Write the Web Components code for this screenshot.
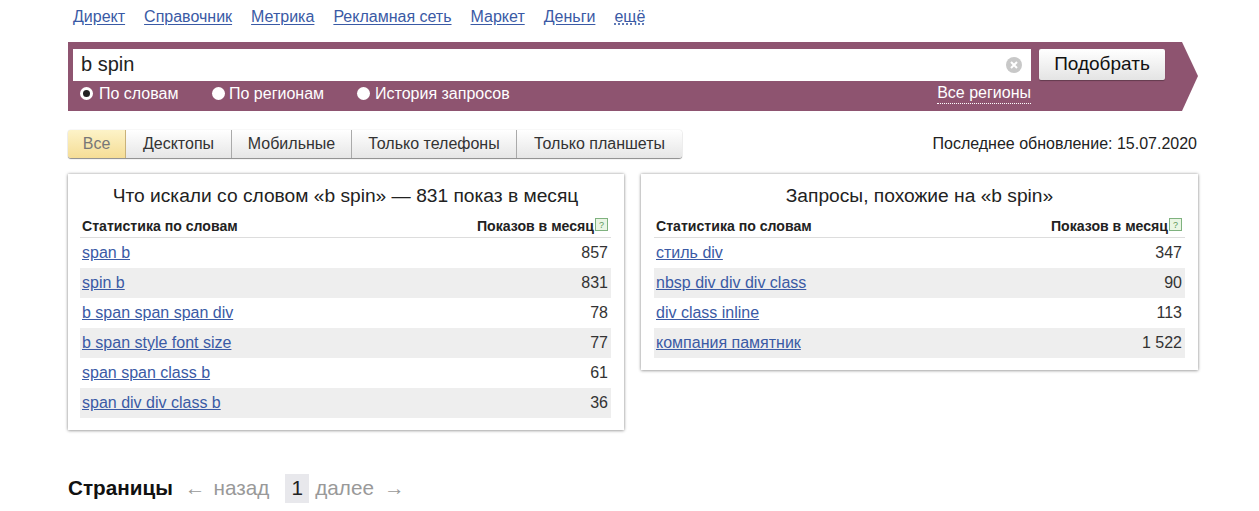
<!DOCTYPE html>
<html>
<head>
<meta charset="utf-8">
<style>
  html, body { margin: 0; padding: 0; background: #fff; }
  body { font-family: "Liberation Sans", Arial, sans-serif; color: #222; }
</style>
</head>
<body>
<ws-page>
  <ws-nav></ws-nav>
  <ws-search query="b spin"></ws-search>
  <ws-filter date="15.07.2020"></ws-filter>
  <ws-columns>
    <ws-panel title="Что искали со словом «b spin» — 831 показ в месяц"
      rows='[["span b","857"],["spin b","831"],["b span span span div","78"],["b span style font size","77"],["span span class b","61"],["span div div class b","36"]]'></ws-panel>
    <ws-panel title="Запросы, похожие на «b spin»"
      rows='[["стиль div","347"],["nbsp div div div class","90"],["div class inline","113"],["компания памятник","1 522"]]'></ws-panel>
  </ws-columns>
  <ws-pager></ws-pager>
</ws-page>

<script>
class WsPage extends HTMLElement {
  constructor() {
    super();
    this.attachShadow({ mode: "open" });
    this.shadowRoot.innerHTML = `
      <style>
        :host { display: block; width: 1130px; margin-left: 68px; }
      </style>
      <slot></slot>
    `;
  }
}

class WsNav extends HTMLElement {
  constructor() {
    super();
    this.attachShadow({ mode: "open" });
    const links = ["Директ", "Справочник", "Метрика", "Рекламная сеть", "Маркет", "Деньги"];
    this.shadowRoot.innerHTML = `
      <style>
        :host { display: flex; height: 42px; padding: 8px 0 0 5px; box-sizing: border-box; gap: 19px; font-size: 16px; line-height: 18px; }
        a { color: #3a5aa5; text-decoration: underline; text-underline-offset: 2px; }
        a.more { text-decoration: underline dotted; }
      </style>
      ${links.map((l) => `<a href="#">${l}</a>`).join("")}
      <a class="more" href="#">ещё</a>
    `;
  }
}

class WsSearch extends HTMLElement {
  constructor() {
    super();
    this.attachShadow({ mode: "open" });
    this.shadowRoot.innerHTML = `
      <style>
        :host {
          display: block; height: 69px; width: 1130px; box-sizing: border-box;
          padding: 7px 0 0 5px; background: #8e5470; color: #fff;
          clip-path: polygon(0 0, 1114px 0, 1130px 34px, 1114px 69px, 0 69px);
        }
        .top { display: flex; gap: 8px; height: 32px; }
        .input {
          width: 958px; height: 32px; box-sizing: border-box; background: #fff; color: #222;
          display: flex; align-items: center; justify-content: space-between;
          padding: 0 9px 2px 8px; font-size: 20px;
        }
        .input svg { display: block; margin-top: 2px; }
        button {
          width: 126px; height: 31px; padding: 0 0 2px; border: 0; border-radius: 2px; font: 19px "Liberation Sans", Arial, sans-serif; color: #111;
          background: linear-gradient(#fff, #e4e4e4); box-shadow: 0 1px 1px rgba(0,0,0,.3);
        }
        .bottom { display: flex; width: 958px; margin-top: 2px; padding-left: 7px; box-sizing: border-box; font-size: 16px; line-height: 20px; }
        .radio { display: flex; align-items: center; gap: 6px; }
        .radio i { width: 13px; height: 13px; border-radius: 50%; background: #fff; box-sizing: border-box; }
        .radio i.on { border: 3.5px solid #fff; background: #222; }
        .radio:nth-child(1) { width: 132px; }
        .radio:nth-child(2) { width: 145px; gap: 4px; }
        .radio:nth-child(3) { gap: 5px; }
        .regions { margin-left: auto; border-bottom: 1px dotted #fff; height: 20px; }
      </style>
      <div class="top">
        <div class="input">
          <span>${this.getAttribute("query")}</span>
          <svg width="16" height="16" viewBox="0 0 16 16"><circle cx="8" cy="8" r="8" fill="#c8c8c8"/><path d="M5 5l6 6M11 5l-6 6" stroke="#fff" stroke-width="2"/></svg>
        </div>
        <button>Подобрать</button>
      </div>
      <div class="bottom">
        <span class="radio"><i class="on"></i>По словам</span>
        <span class="radio"><i></i>По регионам</span>
        <span class="radio"><i></i>История запросов</span>
        <span class="regions">Все регионы</span>
      </div>
    `;
  }
}

class WsFilter extends HTMLElement {
  constructor() {
    super();
    this.attachShadow({ mode: "open" });
    const tabs = [["Все", 58], ["Десктопы", 106], ["Мобильные", 120], ["Только телефоны", 165], ["Только планшеты", 165]];
    this.shadowRoot.innerHTML = `
      <style>
        :host { display: flex; justify-content: space-between; align-items: center; height: 28px; margin-top: 19px; font-size: 16px; }
        .tabs { display: flex; height: 28px; border-radius: 3px; box-shadow: 0 1px 1px rgba(0,0,0,.45), 0 0 1px rgba(0,0,0,.3); }
        .tab {
          display: flex; align-items: center; justify-content: center; box-sizing: border-box; padding-bottom: 1px;
          background: linear-gradient(#fff, #e6e6e6); border-right: 1px solid #aaa; color: #333;
        }
        .tab:last-child { border-right: 0; border-radius: 0 3px 3px 0; }
        .tab.on { background: linear-gradient(#fdf3c8, #f5dd96); color: #777; border-radius: 3px 0 0 3px; border-right-color: #c9b27a; }
        .date { font-size: 16px; color: #222; padding: 0 1px 1px 0; }
      </style>
      <div class="tabs">
        ${tabs.map((t, i) => `<div class="tab${i === 0 ? " on" : ""}" style="width:${t[1]}px">${t[0]}</div>`).join("")}
      </div>
      <div class="date">Последнее обновление: ${this.getAttribute("date")}</div>
    `;
  }
}

class WsColumns extends HTMLElement {
  constructor() {
    super();
    this.attachShadow({ mode: "open" });
    this.shadowRoot.innerHTML = `
      <style>
        :host { display: grid; grid-template-columns: 556px 557px; gap: 17px; align-items: start; margin-top: 16px; }
      </style>
      <slot></slot>
    `;
  }
}

class WsPanel extends HTMLElement {
  constructor() {
    super();
    this.attachShadow({ mode: "open" });
    const rows = JSON.parse(this.getAttribute("rows"));
    this.shadowRoot.innerHTML = `
      <style>
        :host {
          display: block; box-sizing: border-box; padding: 0 13px 12px 12px;
          background: #fff; box-shadow: 0 0 3px rgba(0,0,0,.35), 0 1px 3px rgba(0,0,0,.2);
        }
        :host(:last-child) { padding-left: 13px; }
        h2 { margin: 0; padding-top: 12px; height: 30px; box-sizing: content-box; font-weight: normal; font-size: 19.2px; line-height: 20px; text-align: center; color: #222; }
        .head {
          display: flex; justify-content: space-between; height: 22px; box-sizing: border-box; padding: 0 3px 1px 2px;
          align-items: center; font-size: 14.1px; font-weight: bold; color: #222; border-bottom: 1px solid #ddd;
        }
        .head span { display: flex; align-items: center; gap: 1px; }
        .head svg { display: block; margin-top: -3px; }
        .row { display: flex; justify-content: space-between; align-items: center; height: 30px; box-sizing: border-box; padding: 0 3px 0 2px; font-size: 16px; color: #333; }
        .row:nth-child(even) { background: #eee; }
        a { color: #3a5aa5; text-decoration: underline; }
      </style>
      <h2>${this.getAttribute("title")}</h2>
      <div class="head">
        <div>Статистика по словам</div>
        <span>Показов в месяц
          <svg width="13" height="13" viewBox="0 0 13 13"><rect x=".5" y=".5" width="12" height="12" fill="#eaf5e4" stroke="#7fb27f"/><text x="6.5" y="10" font-size="9" font-family="Liberation Sans" text-anchor="middle" fill="#5c965c" font-weight="normal">?</text></svg>
        </span>
      </div>
      <div>
        ${rows.map((r) => `<div class="row"><a href="#">${r[0]}</a><span>${r[1]}</span></div>`).join("")}
      </div>
    `;
  }
}

class WsPager extends HTMLElement {
  constructor() {
    super();
    this.attachShadow({ mode: "open" });
    this.shadowRoot.innerHTML = `
      <style>
        :host { display: flex; align-items: center; height: 30px; margin-top: 43px; font-size: 20.7px; color: #999; }
        b { color: #111; margin-right: 12px; }
        .cur { background: #e8e8ec; color: #222; width: 24px; height: 29px; display: flex; align-items: center; justify-content: center; margin: 0 6px 0 16px; }
        .gap { margin-left: 8px; }
        .next { margin-left: 10px; }
      </style>
      <b>Страницы</b>
      <span>←</span><span class="gap">назад</span>
      <span class="cur">1</span>
      <span>далее</span><span class="next">→</span>
    `;
  }
}

customElements.define("ws-page", WsPage);
customElements.define("ws-nav", WsNav);
customElements.define("ws-search", WsSearch);
customElements.define("ws-filter", WsFilter);
customElements.define("ws-columns", WsColumns);
customElements.define("ws-panel", WsPanel);
customElements.define("ws-pager", WsPager);
</script>
</body>
</html>
